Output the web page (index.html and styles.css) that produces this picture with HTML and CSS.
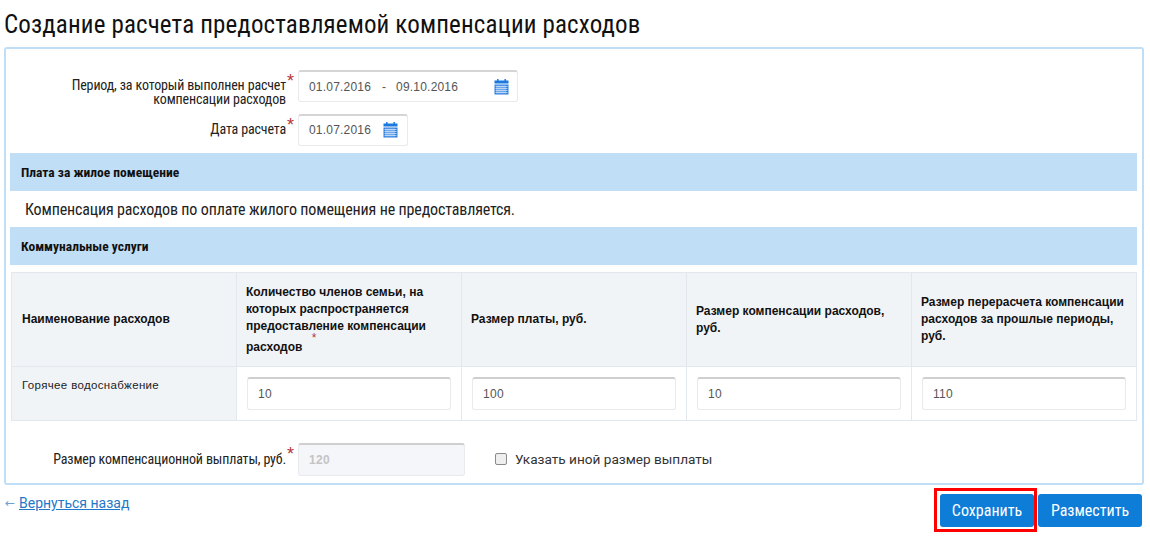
FILE: index.html
```html
<!DOCTYPE html>
<html lang="ru">
<head>
<meta charset="utf-8">
<title>Создание расчета</title>
<link rel="stylesheet" href="styles.css">
</head>
<body>
<svg class="defs" width="0" height="0" aria-hidden="true">
  <symbol id="cal" viewBox="0 0 15 16">
    <rect x="3" y="0" width="1.6" height="3" fill="#2f80e0"/>
    <rect x="10.4" y="0" width="1.6" height="3" fill="#2f80e0"/>
    <rect x="0.5" y="1.5" width="14" height="3" fill="#1b78dc"/>
    <rect x="0.5" y="5.5" width="14" height="10" fill="#2f80e0"/>
    <path d="M1.5 7.5h12M1.5 9.5h12M1.5 11.5h12M1.5 13.5h12M3 6.5v8M5 6.5v8M7 6.5v8M9 6.5v8M11 6.5v8" stroke="#cfe2f7" stroke-width=".8" fill="none"/>
  </symbol>
</svg>
<h1 class="title">Создание расчета предоставляемой компенсации расходов</h1>
<main class="panel">
  <div class="field field-period">
    <label class="lbl">Период, за который выполнен расчет<br>компенсации расходов</label>
    <span class="star">*</span>
    <div class="box box-wide">
      <span class="val">01.07.2016</span><span class="dash">-</span><span class="val">09.10.2016</span>
      <svg class="ico ico-end"><use href="#cal"/></svg>
    </div>
  </div>
  <div class="field field-date">
    <label class="lbl">Дата расчета</label>
    <span class="star">*</span>
    <div class="box box-short">
      <span class="val">01.07.2016</span>
      <svg class="ico"><use href="#cal"/></svg>
    </div>
  </div>
  <div class="bar">Плата за жилое помещение</div>
  <p class="note">Компенсация расходов по оплате жилого помещения не предоставляется.</p>
  <div class="bar">Коммунальные услуги</div>
  <table class="grid">
    <thead>
      <tr>
        <th>Наименование расходов</th>
        <th>Количество членов семьи, на которых распространяется предоставление компенсации расходов <span class="tstar">*</span></th>
        <th>Размер платы, руб.</th>
        <th>Размер компенсации расходов, руб.</th>
        <th>Размер перерасчета компенсации расходов за прошлые периоды, руб.</th>
      </tr>
    </thead>
    <tbody>
      <tr>
        <td class="name">Горячее водоснабжение</td>
        <td class="cell"><input class="inp" value="10"></td>
        <td class="cell"><input class="inp" value="100"></td>
        <td class="cell"><input class="inp" value="10"></td>
        <td class="cell"><input class="inp" value="110"></td>
      </tr>
    </tbody>
  </table>
  <div class="pay">
    <label class="lbl">Размер компенсационной выплаты, руб.</label>
    <span class="star">*</span>
    <input class="inp inp-off" value="120" disabled>
    <span class="chk"></span>
    <span class="chk-text">Указать иной размер выплаты</span>
  </div>
</main>
<footer class="foot">
  <div class="back"><span class="arrow">←</span><a href="#" class="link">Вернуться назад</a></div>
  <div class="actions">
    <button class="btn btn-save">Сохранить<span class="hl"></span></button>
    <button class="btn btn-post">Разместить</button>
  </div>
</footer>
</body>
</html>
```
FILE: styles.css
```css
* { box-sizing: border-box; }
html, body { margin: 0; padding: 0; }
body {
  width: 1150px;
  height: 539px;
  overflow: hidden;
  background: #fff;
  color: #000;
  font-family: "Liberation Sans", Arial, sans-serif;
  padding-top: 10px;
}
.defs { position: absolute; }
.title {
  margin: 0 0 0 4px;
  font: 400 25px/30px "Roboto Condensed", Roboto, sans-serif;
  letter-spacing: .14px;
  color: #111;
  height: 37px;
}
.panel {
  width: 1140px;
  height: 438px;
  margin-left: 4px;
  border: 2px solid #c0def5;
  border-radius: 3px;
  padding: 21px 5px 0 4px;
}
.field { display: flex; align-items: flex-start; }
.field-period { height: 44px; }
.field-date { height: 39px; }
.lbl {
  width: 276px;
  flex: none;
  text-align: right;
  font: 400 14px/14px "Roboto Condensed", Roboto, sans-serif;
  letter-spacing: -.15px;
  color: #222;
}
.field .lbl { padding-top: 8px; }
.star {
  width: 12px;
  flex: none;
  color: #b3353a;
  font: 400 18px/18px "Liberation Sans", sans-serif;
  padding: 2px 0 0 1px;
}
.box {
  height: 32px;
  border: 1px solid #e8eaed;
  border-top: 2px solid #d5d5d5;
  border-radius: 3px;
  display: flex;
  align-items: center;
  padding-left: 10px;
  font-size: 12px;
  color: #555;
  letter-spacing: .2px;
}
.box-wide { width: 220px; }
.box-short { width: 110px; padding-bottom: 1px; }
.dash { width: 24px; text-align: center; margin-left: 1px; }
.ico { width: 15px; height: 16px; margin-left: 12px; flex: none; }
.ico-end { margin-left: auto; margin-right: 8px; }
.bar {
  height: 38px;
  width: 1127px;
  background: #c0def5;
  font: 700 13.5px/38px "Roboto Condensed", Roboto, sans-serif;
  padding-left: 11px;
  color: #111;
}
.note {
  margin: 0;
  height: 36px;
  padding-left: 15px;
  font: 400 16px/38px "Roboto Condensed", Roboto, sans-serif;
  letter-spacing: -.15px;
  color: #222;
}
.grid {
  border-collapse: collapse;
  table-layout: fixed;
  width: 1126px;
  margin: 7px 0 0 1px;
  font-size: 12px;
}
.grid th, .grid td { border: 1px solid #e3e8ee; }
.grid th {
  height: 94px;
  background: #f1f4f7;
  font-weight: 700;
  text-align: left;
  line-height: 17px;
  padding: 0 5px 0 9px;
  color: #111;
}
.grid th:first-child { padding-left: 10px; }
.tstar { color: #b3353a; vertical-align: 4px; position: relative; top: -5px; margin-left: 6px; font-weight: 400; }
.name {
  background: #f1f4f7;
  vertical-align: top;
  padding: 11px 10px 0;
  height: 54px;
  font-size: 11.5px;
  line-height: 14px;
  color: #222;
  letter-spacing: .35px;
}
.cell { padding: 0 10px; }
.inp {
  display: block;
  width: 100%;
  height: 33px;
  border: 1px solid #e8eaed;
  border-top: 2px solid #cfcfcf;
  border-radius: 3px;
  padding: 0 10px;
  font: 400 12px "Liberation Sans", sans-serif;
  color: #555;
  background: #fff;
  outline: none;
  letter-spacing: .3px;
}
.pay {
  display: flex;
  align-items: center;
  height: 33px;
  margin-top: 22px;
}
.pay .lbl, .chk, .chk-text { margin-bottom: 2px; }
.pay .star { align-self: flex-start; }
.inp-off {
  width: 167px;
  background: #f4f6fa;
  color: #c4c4c4;
  font-weight: 700;
  flex: none;
}
.chk {
  width: 12px;
  height: 12px;
  margin-left: 30px;
  border: 1px solid #8a8a8a;
  border-radius: 2px;
  background: #eee;
}
.chk-text {
  margin-left: 8px;
  font: 400 13.6px Roboto, sans-serif;
  color: #333;
}
.foot {
  display: flex;
  justify-content: space-between;
  width: 1142px;
  padding-left: 5px;
  margin-top: 8px;
}
.back { display: flex; font: 400 14px/20px "Liberation Sans", sans-serif; }
.arrow { color: #6f9fd0; width: 14px; font: 400 12px/20px "DejaVu Sans", sans-serif; }
.link { color: #1f78c8; text-decoration: underline; font: 400 14px/20px Roboto, sans-serif; }
.actions { display: flex; gap: 4px; margin-top: 1px; }
.btn {
  position: relative;
  height: 33px;
  border: 0;
  border-radius: 3px;
  background: #0d7dd8;
  color: #fff;
  font: 400 16px "Roboto Condensed", Roboto, sans-serif;
  padding: 0;
}
.btn-save { width: 94px; }
.btn-post { width: 104px; }
.hl {
  position: absolute;
  left: -6px;
  top: -6px;
  right: -3px;
  bottom: -5px;
  border: 3px solid #f00;
}
```
